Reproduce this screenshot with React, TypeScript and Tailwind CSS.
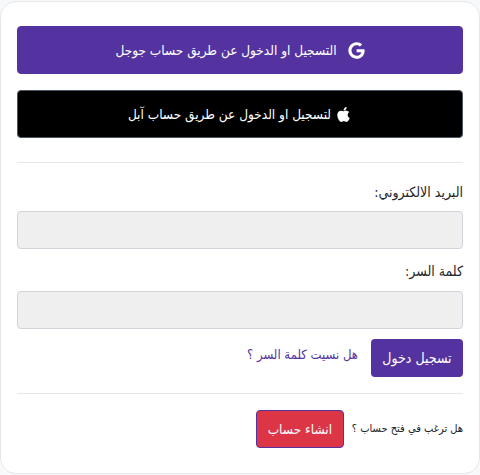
import { FaApple, FaGoogle } from "react-icons/fa";

export default function App() {
  return (
    <div dir="rtl" className="h-[475px] w-[480px] bg-[#f8f9fa] pt-px font-['DejaVu_Sans_Condensed','Liberation_Sans',sans-serif] text-[#212529]">
      <div className="h-[473px] rounded-[16px] border border-[#e5e7eb] bg-white px-4 pt-[24px]">
        <button className="flex h-12 w-full items-center justify-center gap-[11px] rounded border border-[#5433a0] bg-[#5433a0] text-[13.5px] text-white">
          <FaGoogle className="h-[17px] w-[17px]" />
          <span>التسجيل او الدخول عن طريق حساب جوجل</span>
        </button>
        <button className="mt-4 flex h-12 w-full items-center justify-center gap-[4px] rounded border border-[#4b5563] bg-black text-[13.5px] text-white">
          <FaApple className="h-[17px] w-[17px]" />
          <span>لتسجيل او الدخول عن طريق حساب آبل</span>
        </button>
        <hr className="mt-6 border-[#e5e7eb]" />
        <label className="mt-[19px] block text-[14px] leading-[21px]">البريد الالكتروني:</label>
        <input className="mt-[8px] block h-[38px] w-full rounded border border-[#ced4da] bg-[#efefef]" />
        <label className="mt-[12px] block text-[14px] leading-[21px]">كلمة السر:</label>
        <input className="mt-[9px] block h-[38px] w-full rounded border border-[#ced4da] bg-[#efefef]" />
        <div className="mt-[10px] flex items-start gap-[13px]">
          <button className="h-[38px] w-[92px] rounded bg-[#5433a0] text-[14px] text-white">تسجيل دخول</button>
          <a className="mt-[5px] text-[13px] leading-[21px] text-[#5433a0]">هل نسيت كلمة السر ؟</a>
        </div>
        <hr className="mt-4 border-[#e5e7eb]" />
        <div className="mt-4 flex items-center gap-2">
          <span className="text-[11px]">هل ترغب في فتح حساب ؟</span>
          <button className="h-[38px] w-[88px] rounded border border-[#5433a0] bg-[#dc3545] text-[13.5px] text-white">انشاء حساب</button>
        </div>
      </div>
    </div>
  );
}
